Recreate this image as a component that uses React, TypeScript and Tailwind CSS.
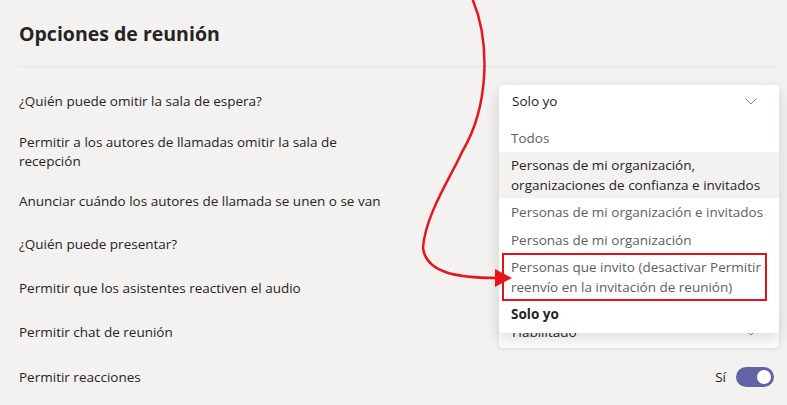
import React from 'react';

const Chevron = ({ className = '' }: { className?: string }) => (
  <svg width="12" height="7" viewBox="0 0 12 7" className={className}>
    <path d="M0.5 0.5L6 6L11.5 0.5" fill="none" stroke="#8a8886" strokeWidth="1" />
  </svg>
);

const Toggle = ({ on = true }: { on?: boolean }) => (
  <div className="flex items-center gap-[10px]">
    <span className="text-[13.5px] text-[#252423]">{on ? 'Sí' : 'No'}</span>
    <div className="flex h-[20px] w-[38px] items-center justify-end rounded-full bg-[#6264a7] px-[3px]">
      <div className="h-[14px] w-[14px] rounded-full bg-white" />
    </div>
  </div>
);

const Select = ({ value }: { value: string }) => (
  <div className="flex h-[32px] w-[280px] items-center justify-between rounded-[4px] bg-white pl-[13px] pr-[22px] shadow-[0_1px_4px_rgba(0,0,0,0.08)]">
    <span className="text-[13.5px] text-[#252423]">{value}</span>
    <Chevron />
  </div>
);

const options = [
  { label: 'Todos' },
  { label: 'Personas de mi organización, organizaciones de confianza e invitados', hover: true },
  { label: 'Personas de mi organización e invitados' },
  { label: 'Personas de mi organización' },
  { label: 'Personas que invito (desactivar Permitir reenvío en la invitación de reunión)', marked: true },
  { label: 'Solo yo', selected: true },
];

const LobbyMenu = () => (
  <div className="relative h-[32px] w-[280px]">
    <div className="absolute left-0 top-0 z-10 w-[280px] rounded-[4px] bg-white pb-[5px] shadow-[0_6px_16px_rgba(0,0,0,0.14)]">
      <div className="flex h-[32px] items-center justify-between pl-[13px] pr-[22px]">
        <span className="text-[#252423]">Solo yo</span>
        <Chevron />
      </div>
      <ul className="pt-[7px]">
        {options.map((o) => (
          <li
            key={o.label}
            className={
              'relative pl-[12px] pr-[8px] leading-[20px] ' +
              (o.label.length > 40 ? 'py-[3px] ' : 'py-[4px] ') +
              (o.hover ? 'bg-[#f3f2f1] text-[#252423] ' : 'text-[#605e5c] ') +
              (o.selected ? 'font-bold text-[#252423]' : '')
            }
          >
            {o.label}
            {o.marked && (
              <div className="pointer-events-none absolute bottom-[-1px] left-[3px] right-[12px] top-[-1px] border-2 border-[#e3131b]" />
            )}
          </li>
        ))}
      </ul>
    </div>
  </div>
);

export default function App() {
  return (
    <div className="relative h-[405px] w-[787px] overflow-hidden bg-[#f3f2f1] font-['Open_Sans',sans-serif] text-[#252423]">
      <div className="pl-[19px] pr-[8px]">
        <div className="border-b border-[#e6e4e2] pb-[19px] pt-[21px]">
          <h1 className="text-[19.5px] font-bold leading-[26px]">Opciones de reunión</h1>
        </div>

        <div className="pt-[13px] text-[13.5px] leading-[19px]">
          <div className="flex h-[42px] items-center justify-between">
            <span className="w-[372px]">¿Quién puede omitir la sala de espera?</span>
            <LobbyMenu />
          </div>
          {/* rows below sit under the open menu, their controls are covered */}
          <div className="flex h-[60px] items-center">
            <span className="w-[372px]">Permitir a los autores de llamadas omitir la sala de recepción</span>
          </div>
          <div className="flex h-[39px] items-center">
            <span className="w-[372px]">Anunciar cuándo los autores de llamada se unen o se van</span>
          </div>
          <div className="flex h-[46px] items-center">
            <span className="w-[372px]">¿Quién puede presentar?</span>
          </div>
          <div className="flex h-[42px] items-center">
            <span className="w-[372px]">Permitir que los asistentes reactiven el audio</span>
          </div>
          <div className="flex h-[46px] items-center justify-between">
            <span className="w-[372px]">Permitir chat de reunión</span>
            <Select value="Habilitado" />
          </div>
          <div className="flex h-[44px] items-center justify-between">
            <span className="w-[372px]">Permitir reacciones</span>
            <div className="pr-[5px]">
              <Toggle />
            </div>
          </div>
        </div>
      </div>

      {/* annotation arrow */}
      <svg className="pointer-events-none absolute left-0 top-0 z-20" width="787" height="405" viewBox="0 0 787 405">
        <path
          d="M472,-2 C490,40 490,105 462,152 C452,175 425,215 423,248 C426,272 455,278 497,278"
          fill="none"
          stroke="#e8151d"
          strokeWidth="2.5"
        />
        <polygon points="512,278 495,269 495,287" fill="#e8151d" />
      </svg>
    </div>
  );
}
